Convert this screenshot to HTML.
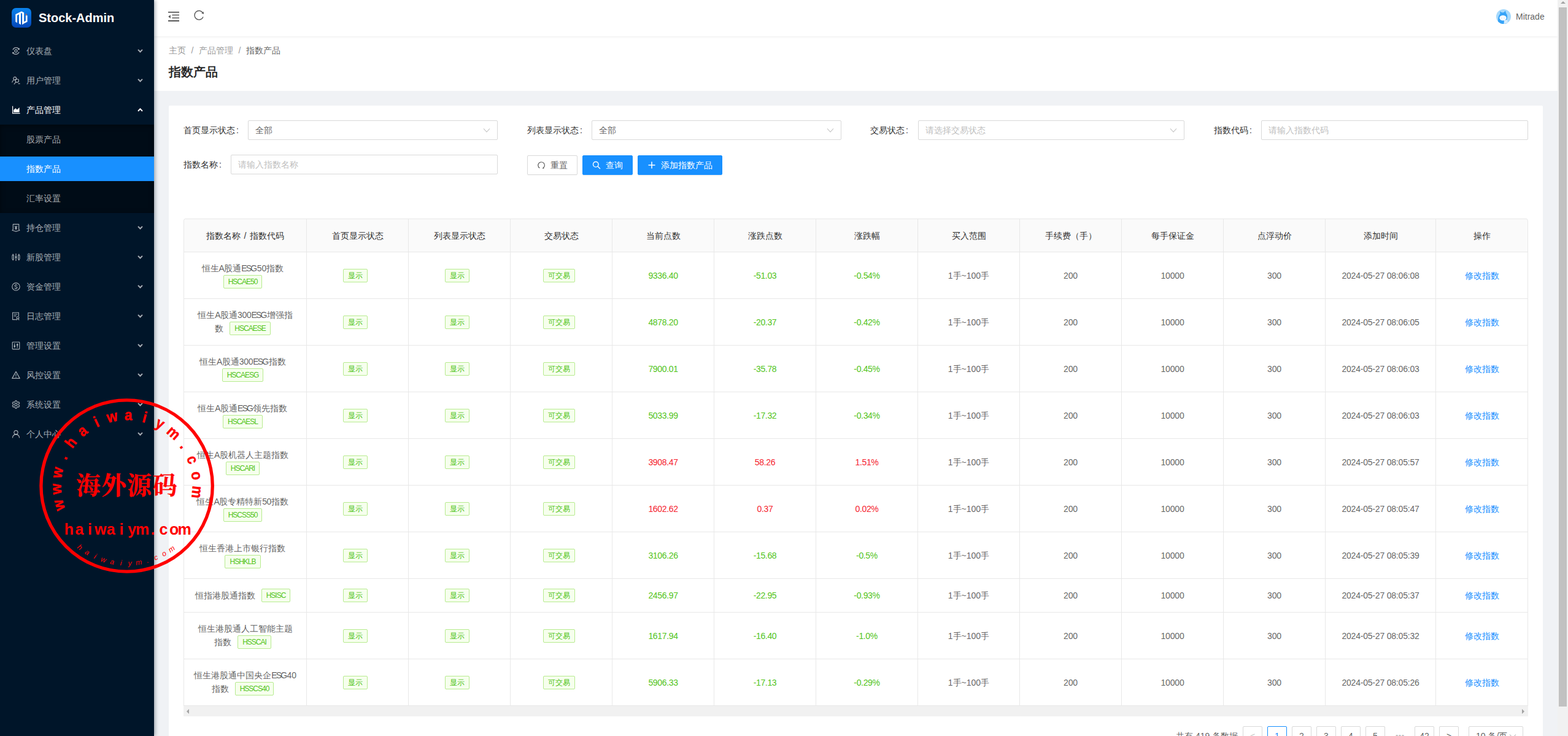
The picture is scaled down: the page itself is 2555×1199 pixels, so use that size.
<!DOCTYPE html>
<html lang="zh">
<head>
<meta charset="utf-8">
<title>Stock-Admin</title>
<style>
*{box-sizing:border-box;margin:0;padding:0}
html,body{width:2555px;height:1199px;background:#f0f2f5}
body{font-family:"Liberation Sans",sans-serif;font-size:14px;color:rgba(0,0,0,.65)}
#root{position:relative;width:2555px;height:1199px;overflow:hidden;background:#f0f2f5}
a{color:#1890ff;text-decoration:none}
/* ---------- sidebar ---------- */
#side{position:absolute;left:0;top:0;width:251px;height:1199px;background:#001529;box-shadow:2px 0 6px rgba(0,21,41,.35);z-index:5}
#logo{position:absolute;left:19px;top:13px;width:32px;height:32px}
#brand{position:absolute;left:63px;top:17px;font-size:20px;font-weight:700;color:#fff;line-height:24px;white-space:nowrap}
.mi{position:absolute;left:0;width:251px;height:40px;line-height:40px;color:rgba(255,255,255,.65);font-size:14px}
.mi .ic{position:absolute;left:19px;top:13px;width:14px;height:14px}
.mi .tx{position:absolute;left:43px;top:0}
.mi .ar{position:absolute;left:223px;top:15px;width:11px;height:10px}
.mi.on{color:#fff}
#sub{position:absolute;left:0;top:203px;width:251px;height:144px;background:#000c17;box-shadow:inset 0 2px 8px rgba(0,0,0,.45)}
.mi.sel{background:#1890ff;color:#fff}
/* ---------- header ---------- */
#hdr{position:absolute;left:251px;top:0;width:2287px;height:59px;background:#fff;box-shadow:0 1px 4px rgba(0,21,41,.08);z-index:3}
#pagehdr{position:absolute;left:251px;top:59px;width:2287px;height:89px;background:#fff;z-index:2}
#crumb{position:absolute;left:24px;top:12px;line-height:22px;color:rgba(0,0,0,.45);white-space:nowrap}
#crumb i{font-style:normal;margin:0 8.5px}
#crumb b{font-weight:400;color:rgba(0,0,0,.65)}
#ptitle{position:absolute;left:24px;top:42px;font-size:20px;line-height:32px;font-weight:700;color:rgba(0,0,0,.85);white-space:nowrap}
#user{position:absolute;left:2219px;top:16px;line-height:22px;color:rgba(0,0,0,.65)}
#avatar{position:absolute;left:2187px;top:15px;width:24px;height:24px}
/* ---------- scrollbar ---------- */
#vsb{position:absolute;left:2538px;top:0;width:17px;height:1199px;background:#f1f1f1;z-index:9}
#vsb .th{position:absolute;left:2px;top:12px;width:13px;height:1139px;background:#c1c1c1}
#vsb .up{position:absolute;left:4.5px;top:2px;width:0;height:0;border-left:4px solid transparent;border-right:4px solid transparent;border-bottom:4.5px solid #a3a3a3}
/* ---------- card ---------- */
#card{position:absolute;left:275px;top:172px;width:2239px;height:1100px;background:#fff;z-index:1;border-radius:2px}
.lbl{position:absolute;line-height:32px;color:rgba(0,0,0,.85);white-space:nowrap}
.lbl i{font-style:normal;margin-left:2px}
.inp{position:absolute;height:32px;border:1px solid #d9d9d9;border-radius:2px;background:#fff;line-height:30px;padding:0 11px;color:rgba(0,0,0,.65);white-space:nowrap}
.inp.ph{color:#bfbfbf}
.inp svg{position:absolute;right:11px;top:9px;width:12px;height:12px}
.btn{position:absolute;top:81px;height:32px;border-radius:2px;line-height:30px;border:1px solid #d9d9d9;background:#fff;color:rgba(0,0,0,.65);white-space:nowrap;box-shadow:0 2px 0 rgba(0,0,0,.015)}
.btn.pri{background:#1890ff;border-color:#1890ff;color:#fff;box-shadow:0 2px 0 rgba(0,0,0,.045)}
.btn svg{position:absolute;left:15px;top:8px;width:14px;height:14px}
.btn span{position:absolute;left:37px;top:0}
/* ---------- table ---------- */
#tbl{position:absolute;left:24px;top:184px;width:2191px;border-collapse:separate;border-spacing:0;table-layout:fixed;border-top:1px solid #e8e8e8;border-left:1px solid #e8e8e8}
#tbl th,#tbl td{border-right:1px solid #e8e8e8;border-bottom:1px solid #e8e8e8;text-align:center;vertical-align:middle;padding:0;white-space:nowrap}
#tbl{border-radius:4px 4px 0 0}
#tbl th:first-child{border-top-left-radius:4px}
#tbl th:last-child{border-top-right-radius:4px}
#tbl th{height:54px;background:#fafafa;font-weight:500;color:rgba(0,0,0,.85);padding-top:2px}
#tbl td{height:76px;line-height:22px}
#tbl tr.single td{height:55px}
.tag{display:inline-block;height:22px;line-height:20px;padding:0 7px;font-size:12px;border:1px solid #b7eb8f;background:#f6ffed;color:#52c41a;border-radius:2px;margin-right:8px;vertical-align:top}
.c0 .tag{vertical-align:baseline;position:relative;top:-1px}
.tag.lt{letter-spacing:-1px}
.L{letter-spacing:-1.8px;margin-right:1.2px}
.D{letter-spacing:-.3px}
#tbl td.n{letter-spacing:-.2px}
.tag.ml{margin-left:10px}
.nm.w{padding-right:8.5px}
#tbl td.cg{color:#52c41a;letter-spacing:-.35px}
#tbl td.cr{color:#f5222d;letter-spacing:-.35px}
.c0{line-height:22px}
#hsb{position:absolute;left:24px;top:978px;width:2191px;height:17px;background:#f1f1f1}
#hsb i{position:absolute;top:4.5px;width:0;height:0;border-top:4px solid transparent;border-bottom:4px solid transparent}
#hsb .l{left:5px;border-right:4.5px solid #a3a3a3}
#hsb .r{right:6px;border-left:4.5px solid #a3a3a3}
/* ---------- pagination ---------- */
.pg{position:absolute;top:1011px;width:32px;height:32px;border:1px solid #d9d9d9;border-radius:2px;background:#fff;text-align:center;line-height:30px;color:rgba(0,0,0,.65)}
.pg.act{border-color:#1890ff;color:#1890ff}
#total{position:absolute;top:1011px;left:1641px;line-height:32px;white-space:nowrap}
/* ---------- stamp ---------- */
#stamp{position:absolute;left:56px;top:640px;width:300px;height:300px;z-index:20}
</style>
</head>
<body>
<div id="root">

<div id="side">
  <svg id="logo" viewBox="0 0 32 32">
    <defs><linearGradient id="lg" x1="0" y1="0" x2="0" y2="1"><stop offset="0" stop-color="#0a84ee"/><stop offset="1" stop-color="#0546b8"/></linearGradient></defs>
    <rect width="32" height="32" rx="7" fill="url(#lg)"/>
    <path d="M6.25 10.3 L16 5.4 L20.2 7.6 V25.2 L17.1 27.3 V8.9 L16 8.3 L15 8.8 V27.3 L11.9 25.2 V10.4 L9 11.9 V24.2 L6.25 22.4 Z" fill="#fff"/>
    <path d="M20.2 22.3 L22.9 21 V12.3 H25.6 V22.6 L20.2 25.3 Z" fill="#fff"/>
    <path d="M22.9 9.3 L25.3 10.8 L22.9 12.1 Z" fill="#ff6a2b"/>
  </svg>
  <div id="brand">Stock-Admin</div>

  <div id="sub"></div>
  <div class="mi " style="top:63px"><svg class="ic" viewBox="0 0 14 14"><path d="M2 5.2 A5.6 5.6 0 0 1 12.2 4.6 M12 8.8 A5.6 5.6 0 0 1 1.8 9.4" stroke="currentColor" fill="none" stroke-width="1.15"/><path d="M12.9 2.2 L12.5 5.3 L9.6 4.4Z M1.1 11.8 L1.5 8.7 L4.4 9.6Z" fill="currentColor"/><circle cx="7" cy="7" r="2.1" stroke="currentColor" fill="none" stroke-width="1.15"/></svg><span class="tx">仪表盘</span><svg class="ar" viewBox="0 0 11 10"><path d="M2 2.8 L5.5 6.5 L9 2.8" stroke="currentColor" stroke-width="1.9" fill="none"/></svg></div>
  <div class="mi " style="top:111px"><svg class="ic" viewBox="0 0 14 14"><circle cx="5.2" cy="3.8" r="2.4" stroke="currentColor" fill="none" stroke-width="1.15"/><path d="M0.8 10.5 Q1.2 6.8 4.4 6.5" stroke="currentColor" fill="none" stroke-width="1.15"/><circle cx="8.8" cy="7.4" r="2.7" stroke="currentColor" fill="none" stroke-width="1.15"/><path d="M7 9.6 L3.8 13.4 M10.6 12.4 H13.6" stroke="currentColor" fill="none" stroke-width="1.15"/></svg><span class="tx">用户管理</span><svg class="ar" viewBox="0 0 11 10"><path d="M2 2.8 L5.5 6.5 L9 2.8" stroke="currentColor" stroke-width="1.9" fill="none"/></svg></div>
  <div class="mi on" style="top:159px"><svg class="ic" viewBox="0 0 14 14"><path d="M1 0.8 V13.2 H13.6 V12 H2.2 V0.8Z" fill="currentColor"/><path d="M3.2 11 V7.2 L6.3 4.3 L8.8 6.8 L12.6 3 V11Z" fill="currentColor"/></svg><span class="tx">产品管理</span><svg class="ar" viewBox="0 0 11 10"><path d="M2 7 L5.5 3.3 L9 7" stroke="currentColor" stroke-width="1.9" fill="none"/></svg></div>
  <div class="mi " style="top:207px"><span class="tx">股票产品</span></div>
  <div class="mi sel" style="top:255px"><span class="tx">指数产品</span></div>
  <div class="mi " style="top:303px"><span class="tx">汇率设置</span></div>
  <div class="mi " style="top:351px"><svg class="ic" viewBox="0 0 14 14"><path d="M2.3 1.3 H11.7 V10 L13 11.2 L8 12.8 H6 L1 11.2 L2.3 10 Z" stroke="currentColor" fill="none" stroke-width="1.15" stroke-linejoin="round"/><path d="M5 3.8 L7 6.4 L9 3.8 M7 6.4 V10.2 M5.2 6.9 H8.8 M5.2 8.6 H8.8" stroke="currentColor" fill="none" stroke-width="1.15" stroke-width="1"/></svg><span class="tx">持仓管理</span><svg class="ar" viewBox="0 0 11 10"><path d="M2 2.8 L5.5 6.5 L9 2.8" stroke="currentColor" stroke-width="1.9" fill="none"/></svg></div>
  <div class="mi " style="top:399px"><svg class="ic" viewBox="0 0 14 14"><rect x="1" y="3.4" width="2.4" height="7.2" rx="1.2" stroke="currentColor" fill="none" stroke-width="1.15"/><rect x="5.9" y="5.3" width="2.2" height="3.4" rx="1.1" fill="currentColor"/><path d="M7 1 V13" stroke="currentColor" fill="none" stroke-width="1.15"/><rect x="10.6" y="3.4" width="2.4" height="7.2" rx="1.2" stroke="currentColor" fill="none" stroke-width="1.15"/><path d="M2.2 1.4 V3.4 M2.2 10.6 V12.6 M11.8 1.4 V3.4 M11.8 10.6 V12.6" stroke="currentColor" fill="none" stroke-width="1.15"/></svg><span class="tx">新股管理</span><svg class="ar" viewBox="0 0 11 10"><path d="M2 2.8 L5.5 6.5 L9 2.8" stroke="currentColor" stroke-width="1.9" fill="none"/></svg></div>
  <div class="mi " style="top:447px"><svg class="ic" viewBox="0 0 14 14"><circle cx="7" cy="7" r="6.2" stroke="currentColor" fill="none" stroke-width="1.15"/><path d="M9 5.2 Q8.6 4 7 4 Q5.1 4 5.1 5.5 Q5.1 6.7 7 7 Q9 7.3 9 8.6 Q9 10 7 10 Q5.2 10 4.9 8.8 M7 2.8 V4 M7 10 V11.2" stroke="currentColor" fill="none" stroke-width="1.15" stroke-width="1"/></svg><span class="tx">资金管理</span><svg class="ar" viewBox="0 0 11 10"><path d="M2 2.8 L5.5 6.5 L9 2.8" stroke="currentColor" stroke-width="1.9" fill="none"/></svg></div>
  <div class="mi " style="top:495px"><svg class="ic" viewBox="0 0 14 14"><path d="M7.5 12.6 H1.6 V1.2 H11.4 V7" stroke="currentColor" fill="none" stroke-width="1.15"/><path d="M3.6 4 H9.4 M3.6 6.6 H7.4" stroke="currentColor" fill="none" stroke-width="1.15"/><circle cx="10" cy="9.6" r="1.9" stroke="currentColor" fill="none" stroke-width="1.15"/><path d="M8.8 11 L8.2 13.6 M11.2 11 L11.8 13.6" stroke="currentColor" fill="none" stroke-width="1.15"/></svg><span class="tx">日志管理</span><svg class="ar" viewBox="0 0 11 10"><path d="M2 2.8 L5.5 6.5 L9 2.8" stroke="currentColor" stroke-width="1.9" fill="none"/></svg></div>
  <div class="mi " style="top:543px"><svg class="ic" viewBox="0 0 14 14"><rect x="1.2" y="1.2" width="11.6" height="11.6" rx="0.8" stroke="currentColor" fill="none" stroke-width="1.15"/><path d="M4.8 3.2 V10.8 M9.2 3.2 V10.8" stroke="currentColor" fill="none" stroke-width="1.15"/><rect x="3.6" y="7" width="2.4" height="1.8" fill="currentColor"/><rect x="8" y="4.8" width="2.4" height="1.8" fill="currentColor"/></svg><span class="tx">管理设置</span><svg class="ar" viewBox="0 0 11 10"><path d="M2 2.8 L5.5 6.5 L9 2.8" stroke="currentColor" stroke-width="1.9" fill="none"/></svg></div>
  <div class="mi " style="top:591px"><svg class="ic" viewBox="0 0 14 14"><path d="M7 1.4 L13.2 12.4 H0.8Z" stroke="currentColor" fill="none" stroke-width="1.15" stroke-linejoin="round"/><path d="M7 5.4 V8.8" stroke="currentColor" fill="none" stroke-width="1.15"/><circle cx="7" cy="10.5" r="0.7" fill="currentColor"/></svg><span class="tx">风控设置</span><svg class="ar" viewBox="0 0 11 10"><path d="M2 2.8 L5.5 6.5 L9 2.8" stroke="currentColor" stroke-width="1.9" fill="none"/></svg></div>
  <div class="mi " style="top:639px"><svg class="ic" viewBox="0 0 14 14"><path d="M5.9 0.9 H8.1 L8.5 2.6 L10 3.4 L11.6 2.8 L12.8 4.8 L11.5 6 V8 L12.8 9.2 L11.6 11.2 L10 10.6 L8.5 11.4 L8.1 13.1 H5.9 L5.5 11.4 L4 10.6 L2.4 11.2 L1.2 9.2 L2.5 8 V6 L1.2 4.8 L2.4 2.8 L4 3.4 L5.5 2.6Z" stroke="currentColor" fill="none" stroke-width="1.15" stroke-linejoin="round"/><circle cx="7" cy="7" r="2.1" stroke="currentColor" fill="none" stroke-width="1.15"/></svg><span class="tx">系统设置</span><svg class="ar" viewBox="0 0 11 10"><path d="M2 2.8 L5.5 6.5 L9 2.8" stroke="currentColor" stroke-width="1.9" fill="none"/></svg></div>
  <div class="mi " style="top:687px"><svg class="ic" viewBox="0 0 14 14"><circle cx="7" cy="4.4" r="3.1" stroke="currentColor" fill="none" stroke-width="1.15"/><path d="M1.4 13.4 Q1.8 8 7 7.6 Q12.2 8 12.6 13.4" stroke="currentColor" fill="none" stroke-width="1.15"/></svg><span class="tx">个人中心</span><svg class="ar" viewBox="0 0 11 10"><path d="M2 2.8 L5.5 6.5 L9 2.8" stroke="currentColor" stroke-width="1.9" fill="none"/></svg></div>
</div>

<div id="hdr">
  <svg style="position:absolute;left:23px;top:19px;width:18px;height:16px" viewBox="0 0 18 16"><path d="M0 0.9H18M0 15H18" stroke="#595959" stroke-width="1.8" fill="none"/><path d="M6.4 5.5H18M6.4 10.3H18" stroke="#595959" stroke-width="1.4" fill="none"/><path d="M0.2 8.1 L3.9 5.2 V11 Z" fill="#595959"/></svg>
  <svg style="position:absolute;left:60px;top:12px;width:26px;height:26px" viewBox="60 12 26 26"><path d="M80.07 27.53 A7.3 7.3 0 1 1 79.49 20.93" stroke="#595959" stroke-width="1.4" fill="none"/><path d="M80.8 18.9 L81 22.9 L77.2 21.5 Z" fill="#595959"/></svg>
  <svg id="avatar" viewBox="0 0 24 24"><defs><clipPath id="avc"><circle cx="12" cy="12" r="12"/></clipPath></defs><circle cx="12" cy="12" r="12" fill="#a6d9fc"/><g clip-path="url(#avc)"><path d="M3 21 Q2.5 11 6.5 7.5 L6 3.5 L9.5 5.5 Q11 5 12.5 5.2 L15 2.5 L16 6.5 Q19.5 10 17.5 16 L19 25 H3Z" fill="#36a3f7"/><path d="M13 18 L18 17 L19.5 24 H12.5Z" fill="#d6ecfd"/><ellipse cx="11" cy="14.3" rx="5.6" ry="4.2" fill="#fff"/><circle cx="9" cy="14.2" r=".55" fill="#8fb6ee"/><circle cx="13" cy="14.2" r=".55" fill="#8fb6ee"/></g></svg>
  <div id="user">Mitrade</div>
</div>

<div id="pagehdr">
  <div id="crumb">主页<i>/</i>产品管理<i>/</i><b>指数产品</b></div>
  <div id="ptitle">指数产品</div>
</div>

<div id="card">
  <div class="lbl" style="left:24px;top:24px">首页显示状态<i>:</i></div>
  <div class="inp" style="left:129px;top:24px;width:407px">全部<svg viewBox="0 0 12 12"><path d="M1 3.5 L6 9 L11 3.5" stroke="#bfbfbf" stroke-width="1.1" fill="none"/></svg></div>
  <div class="lbl" style="left:584px;top:24px">列表显示状态<i>:</i></div>
  <div class="inp" style="left:689px;top:24px;width:407px">全部<svg viewBox="0 0 12 12"><path d="M1 3.5 L6 9 L11 3.5" stroke="#bfbfbf" stroke-width="1.1" fill="none"/></svg></div>
  <div class="lbl" style="left:1143px;top:24px">交易状态<i>:</i></div>
  <div class="inp ph" style="left:1221px;top:24px;width:434px">请选择交易状态<svg viewBox="0 0 12 12"><path d="M1 3.5 L6 9 L11 3.5" stroke="#bfbfbf" stroke-width="1.1" fill="none"/></svg></div>
  <div class="lbl" style="left:1703px;top:24px">指数代码<i>:</i></div>
  <div class="inp ph" style="left:1780px;top:24px;width:435px">请输入指数代码</div>

  <div class="lbl" style="left:24px;top:80px">指数名称<i>:</i></div>
  <div class="inp ph" style="left:101px;top:80px;width:435px">请输入指数名称</div>

  <div class="btn" style="left:584px;width:82px"><svg viewBox="0 0 14 14"><path d="M4.3 11.8 A5.3 5.3 0 1 1 10.2 11.6" stroke="#595959" stroke-width="1.2" fill="none"/><path d="M8.6 12.6 L11.6 12.8 L10.6 10 Z" fill="#595959"/></svg><span>重置</span></div>
  <div class="btn pri" style="left:674px;width:82px"><svg viewBox="0 0 14 14"><circle cx="5.8" cy="5.8" r="4.3" stroke="#fff" stroke-width="1.4" fill="none"/><path d="M9 9 L13 13" stroke="#fff" stroke-width="1.5"/></svg><span>查询</span></div>
  <div class="btn pri" style="left:764px;width:138px"><svg viewBox="0 0 14 14"><path d="M7 1.5 V12.5 M1.5 7 H12.5" stroke="#fff" stroke-width="1.5"/></svg><span>添加指数产品</span></div>

  <table id="tbl">
    <colgroup><col style="width:200px"><col style="width:166px"><col style="width:166px"><col style="width:166px"><col style="width:166px"><col style="width:166px"><col style="width:166px"><col style="width:166px"><col style="width:166px"><col style="width:166px"><col style="width:166px"><col style="width:180px"><col style="width:150px"></colgroup>
    <thead><tr><th style="word-spacing:1.6px">指数名称 / 指数代码</th><th>首页显示状态</th><th>列表显示状态</th><th>交易状态</th><th>当前点数</th><th>涨跌点数</th><th>涨跌幅</th><th>买入范围</th><th>手续费（手）</th><th>每手保证金</th><th>点浮动价</th><th>添加时间</th><th>操作</th></tr></thead>
    <tbody>
<tr><td class="c0"><span class="nm w">恒生<span class="L">A</span>股通<span class="L">ESG</span>5<span class="D">0</span>指数</span><br><span class="tag tg lt">HSCAE50</span></td><td><span class="tag tg">显示</span></td><td><span class="tag tg">显示</span></td><td><span class="tag tg">可交易</span></td><td class="cg">9336.40</td><td class="cg">-51.03</td><td class="cg">-0.54%</td><td>1手~100手</td><td class="n">200</td><td class="n">10000</td><td class="n">300</td><td class="n">2024-05-27 08:06:08</td><td><a>修改指数</a></td></tr>
<tr><td class="c0"><span class="nm">恒生<span class="L">A</span>股通<span class="D">300</span><span class="L">ESG</span>增强指</span><br><span class="nm">数</span><span class="tag tg lt ml">HSCAESE</span></td><td><span class="tag tg">显示</span></td><td><span class="tag tg">显示</span></td><td><span class="tag tg">可交易</span></td><td class="cg">4878.20</td><td class="cg">-20.37</td><td class="cg">-0.42%</td><td>1手~100手</td><td class="n">200</td><td class="n">10000</td><td class="n">300</td><td class="n">2024-05-27 08:06:05</td><td><a>修改指数</a></td></tr>
<tr><td class="c0"><span class="nm w">恒生<span class="L">A</span>股通<span class="D">300</span><span class="L">ESG</span>指数</span><br><span class="tag tg lt">HSCAESG</span></td><td><span class="tag tg">显示</span></td><td><span class="tag tg">显示</span></td><td><span class="tag tg">可交易</span></td><td class="cg">7900.01</td><td class="cg">-35.78</td><td class="cg">-0.45%</td><td>1手~100手</td><td class="n">200</td><td class="n">10000</td><td class="n">300</td><td class="n">2024-05-27 08:06:03</td><td><a>修改指数</a></td></tr>
<tr><td class="c0"><span class="nm w">恒生<span class="L">A</span>股通<span class="L">ESG</span>领先指数</span><br><span class="tag tg lt">HSCAESL</span></td><td><span class="tag tg">显示</span></td><td><span class="tag tg">显示</span></td><td><span class="tag tg">可交易</span></td><td class="cg">5033.99</td><td class="cg">-17.32</td><td class="cg">-0.34%</td><td>1手~100手</td><td class="n">200</td><td class="n">10000</td><td class="n">300</td><td class="n">2024-05-27 08:06:03</td><td><a>修改指数</a></td></tr>
<tr><td class="c0"><span class="nm w">恒生<span class="L">A</span>股机器人主题指数</span><br><span class="tag tg lt">HSCARI</span></td><td><span class="tag tg">显示</span></td><td><span class="tag tg">显示</span></td><td><span class="tag tg">可交易</span></td><td class="cr">3908.47</td><td class="cr">58.26</td><td class="cr">1.51%</td><td>1手~100手</td><td class="n">200</td><td class="n">10000</td><td class="n">300</td><td class="n">2024-05-27 08:05:57</td><td><a>修改指数</a></td></tr>
<tr><td class="c0"><span class="nm w">恒生<span class="L">A</span>股专精特新<span class="D">50</span>指数</span><br><span class="tag tg lt">HSCSS50</span></td><td><span class="tag tg">显示</span></td><td><span class="tag tg">显示</span></td><td><span class="tag tg">可交易</span></td><td class="cr">1602.62</td><td class="cr">0.37</td><td class="cr">0.02%</td><td>1手~100手</td><td class="n">200</td><td class="n">10000</td><td class="n">300</td><td class="n">2024-05-27 08:05:47</td><td><a>修改指数</a></td></tr>
<tr><td class="c0"><span class="nm w">恒生香港上市银行指数</span><br><span class="tag tg lt">HSHKLB</span></td><td><span class="tag tg">显示</span></td><td><span class="tag tg">显示</span></td><td><span class="tag tg">可交易</span></td><td class="cg">3106.26</td><td class="cg">-15.68</td><td class="cg">-0.5%</td><td>1手~100手</td><td class="n">200</td><td class="n">10000</td><td class="n">300</td><td class="n">2024-05-27 08:05:39</td><td><a>修改指数</a></td></tr>
<tr class="single"><td class="c0"><span class="nm">恒指港股通指数</span><span class="tag tg lt ml">HSISC</span></td><td><span class="tag tg">显示</span></td><td><span class="tag tg">显示</span></td><td><span class="tag tg">可交易</span></td><td class="cg">2456.97</td><td class="cg">-22.95</td><td class="cg">-0.93%</td><td>1手~100手</td><td class="n">200</td><td class="n">10000</td><td class="n">300</td><td class="n">2024-05-27 08:05:37</td><td><a>修改指数</a></td></tr>
<tr><td class="c0"><span class="nm">恒生港股通人工智能主题</span><br><span class="nm">指数</span><span class="tag tg lt ml">HSSCAI</span></td><td><span class="tag tg">显示</span></td><td><span class="tag tg">显示</span></td><td><span class="tag tg">可交易</span></td><td class="cg">1617.94</td><td class="cg">-16.40</td><td class="cg">-1.0%</td><td>1手~100手</td><td class="n">200</td><td class="n">10000</td><td class="n">300</td><td class="n">2024-05-27 08:05:32</td><td><a>修改指数</a></td></tr>
<tr><td class="c0"><span class="nm">恒生港股通中国央企<span class="L">ESG</span>4<span class="D">0</span></span><br><span class="nm">指数</span><span class="tag tg lt ml">HSSCS40</span></td><td><span class="tag tg">显示</span></td><td><span class="tag tg">显示</span></td><td><span class="tag tg">可交易</span></td><td class="cg">5906.33</td><td class="cg">-17.13</td><td class="cg">-0.29%</td><td>1手~100手</td><td class="n">200</td><td class="n">10000</td><td class="n">300</td><td class="n">2024-05-27 08:05:26</td><td><a>修改指数</a></td></tr>
    </tbody>
  </table>
  <div id="hsb"><i class="l"></i><i class="r"></i></div>

  <div id="total">共有 419 条数据</div>
  <div class="pg" style="left:1750px;color:rgba(0,0,0,.25)">&lt;</div>
  <div class="pg act" style="left:1790px">1</div>
  <div class="pg" style="left:1830px">2</div>
  <div class="pg" style="left:1870px">3</div>
  <div class="pg" style="left:1910px">4</div>
  <div class="pg" style="left:1950px">5</div>
  <div class="pg" style="left:1990px;border-color:transparent;color:rgba(0,0,0,.25)">•••</div>
  <div class="pg" style="left:2030px">42</div>
  <div class="pg" style="left:2070px">&gt;</div>
  <div class="pg" style="left:2118px;width:89px;text-align:left;padding-left:11px">10 条/页<svg style="position:absolute;right:10px;top:9px;width:12px;height:12px" viewBox="0 0 12 12"><path d="M1 3.5 L6 9 L11 3.5" stroke="#bfbfbf" stroke-width="1.1" fill="none"/></svg></div>
</div>

<div id="vsb"><div class="up"></div><div class="th"></div></div>

<svg id="stamp" viewBox="56 640 300 300" font-family="Liberation Sans, sans-serif" fill="#f00">
<circle cx="206.6" cy="791.5" r="139.7" fill="none" stroke="#f00" stroke-width="5.3"/>
<g font-size="25" font-weight="700" text-anchor="middle" stroke="#f00" stroke-width=".5">
<text transform="translate(103.7 820.8) rotate(254.1) scale(.9 1)">w</text>
<text transform="translate(99.7 796.2) rotate(267.5) scale(.9 1)">w</text>
<text transform="translate(101.5 771.3) rotate(280.9) scale(.9 1)">w</text>
<text transform="translate(109.1 747.5) rotate(294.3) scale(.9 1)">.</text>
<text transform="translate(121.9 726.1) rotate(307.7) scale(.9 1)">h</text>
<text transform="translate(139.4 708.2) rotate(321.1) scale(.9 1)">a</text>
<text transform="translate(160.5 694.9) rotate(334.5) scale(.9 1)">i</text>
<text transform="translate(184.2 686.9) rotate(347.9) scale(.9 1)">w</text>
<text transform="translate(209.0 684.5) rotate(361.3) scale(.9 1)">a</text>
<text transform="translate(233.8 688.0) rotate(374.7) scale(.9 1)">i</text>
<text transform="translate(257.0 697.1) rotate(388.1) scale(.9 1)">y</text>
<text transform="translate(277.5 711.4) rotate(401.5) scale(.9 1)">m</text>
<text transform="translate(294.1 730.0) rotate(414.9) scale(.9 1)">.</text>
<text transform="translate(306.0 751.9) rotate(428.3) scale(.9 1)">c</text>
<text transform="translate(312.5 776.1) rotate(441.7) scale(.9 1)">o</text>
<text transform="translate(313.2 801.0) rotate(455.1) scale(.9 1)">m</text>
</g>
<g font-family="'Liberation Serif', 'Noto Serif CJK SC', serif" font-size="40" font-weight="700" text-anchor="middle" fill="#f00" stroke="#f00" stroke-width=".4">
<text x="144" y="805.3">海</text>
<text x="185.5" y="805.3">外</text>
<text x="227" y="805.3">源</text>
<text x="268.5" y="805.3">码</text>
</g>
<g font-size="25" font-weight="700" text-anchor="middle">
<text x="112.3" y="871.2">h</text>
<text x="129.4" y="871.2">a</text>
<text x="146.6" y="871.2">i</text>
<text x="163.7" y="871.2">w</text>
<text x="180.8" y="871.2">a</text>
<text x="197.9" y="871.2">i</text>
<text x="215.1" y="871.2">y</text>
<text x="232.2" y="871.2">m</text>
<text x="249.3" y="871.2">.</text>
<text x="266.5" y="871.2">c</text>
<text x="283.6" y="871.2">o</text>
<text x="300.7" y="871.2">m</text>
</g>
<g font-size="12" font-style="italic" text-anchor="middle">
<text transform="translate(127.6 894.8) rotate(37.4)">h</text>
<text transform="translate(140.1 903.2) rotate(30.8)">a</text>
<text transform="translate(153.4 910.1) rotate(24.2)">i</text>
<text transform="translate(167.4 915.5) rotate(17.5)">w</text>
<text transform="translate(182.0 919.1) rotate(10.9)">a</text>
<text transform="translate(196.8 921.1) rotate(4.3)">i</text>
<text transform="translate(211.8 921.4) rotate(-2.3)">y</text>
<text transform="translate(226.8 919.9) rotate(-8.9)">m</text>
<text transform="translate(241.4 916.7) rotate(-15.5)">.</text>
<text transform="translate(255.6 911.9) rotate(-22.2)">c</text>
<text transform="translate(269.2 905.4) rotate(-28.8)">o</text>
<text transform="translate(281.9 897.5) rotate(-35.4)">m</text>
</g>
</svg>

</div>
</body>
</html>
